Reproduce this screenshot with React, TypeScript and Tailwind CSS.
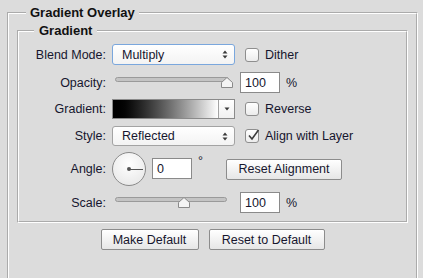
import React from 'react';

const ink = 'text-[#16162e]';

function UpDown() {
  return (
    <svg width="6" height="9" viewBox="0 0 6 9" className="shrink-0">
      <path d="M3 0.5 L5.5 3.5 H0.5 Z" fill="#3a3a3a" />
      <path d="M3 8.5 L5.5 5.5 H0.5 Z" fill="#3a3a3a" />
    </svg>
  );
}

function Select({ value, focused }: { value: string; focused?: boolean }) {
  return (
    <div
      className={`w-[123px] flex items-center justify-between pl-[9px] pr-[6px] rounded-[3px] border bg-gradient-to-b from-white to-[#f3f3f3] ${
        focused ? 'h-[21px] border-[#7aa7dd]' : 'h-[20px] border-[#a3a3a3]'
      }`}
    >
      <span className={ink}>{value}</span>
      <UpDown />
    </div>
  );
}

function Check({ label, checked }: { label: string; checked?: boolean }) {
  return (
    <div className="flex items-center ml-[10px]">
      <div className="relative w-[14px] h-[14px] rounded-[3px] border border-[#8e8e8e] bg-gradient-to-b from-white to-[#ececec]">
        {checked && (
          <svg width="16" height="15" viewBox="0 0 16 15" className="absolute left-[0px] top-[-2px]">
            <path d="M3 7.5 L6 11 L12.5 2" fill="none" stroke="#3c3c3c" strokeWidth="1.6" />
          </svg>
        )}
      </div>
      <span className={`ml-[6px] ${ink}`}>{label}</span>
    </div>
  );
}

function Thumb() {
  return (
    <svg width="12" height="11" viewBox="0 0 12 11">
      <path d="M6 0.5 L11.5 5.5 V10.5 H0.5 V5.5 Z" fill="#f4f4f4" stroke="#8a8a8a" />
    </svg>
  );
}

function Slider({ width, pos }: { width: number; pos: number }) {
  return (
    <div className="ml-[3px] mt-[5px] self-start flex flex-col" style={{ width }}>
      <div className="h-[5px] rounded-[3px] border border-[#9a9a9a] bg-[#c4c4c4]" />
      <div className="h-[10px] -mt-[5px]" style={{ paddingLeft: pos }}>
        <Thumb />
      </div>
    </div>
  );
}

function NumBox({ value, w = 40 }: { value: string; w?: number }) {
  return (
    <div
      className={`h-[21px] border border-[#8a8a8a] bg-white flex items-center pl-[4px] ${ink}`}
      style={{ width: w }}
    >
      {value}
    </div>
  );
}

function Btn({ label, w }: { label: string; w: number }) {
  return (
    <div
      className={`h-[21px] flex items-center justify-center rounded-[2px] border border-[#8c8c8c] bg-gradient-to-b from-white to-[#e6e6e6] text-[12.5px] ${ink}`}
      style={{ width: w }}
    >
      {label}
    </div>
  );
}

function Row({ label, children, className = '' }: { label: string; children: React.ReactNode; className?: string }) {
  return (
    <div className={`flex items-center ${className}`}>
      <div className={`w-[87px] text-right ${ink}`}>{label}</div>
      <div className="ml-[6px] flex items-center self-stretch">{children}</div>
    </div>
  );
}

export default function App() {
  return (
    <div className="w-[423px] h-[278px] overflow-hidden bg-[#dcdcdc] font-['Liberation_Sans',Arial,sans-serif] text-[12.5px] leading-[14px] pt-[5px]">
      <fieldset className="ml-[7px] w-[411px] h-[300px] border-2 border-white [border-style:groove] p-0">
        <legend className="ml-[17px] px-[4px] text-[13px] leading-[15px] font-bold text-[#111]">Gradient Overlay</legend>

        <fieldset className="ml-[8px] mt-[3px] w-[391px] h-[200px] border-2 border-white [border-style:groove] p-0 pt-[6px]">
          <legend className="ml-[15px] px-[5px] text-[13px] leading-[15px] font-bold text-[#111]">Gradient</legend>

          <Row label="Blend Mode:" className="h-[21px]">
            <Select value="Multiply" focused />
            <Check label="Dither" />
          </Row>

          <Row label="Opacity:" className="h-[21px] mt-[7px]">
            <Slider width={114} pos={106} />
            <div className="ml-[11px]">
              <NumBox value="100" />
            </div>
            <span className={`ml-[6px] ${ink}`}>%</span>
          </Row>

          <Row label="Gradient:" className="h-[20px] mt-[6px]">
            <div className="w-[123px] h-[20px] flex border border-[#8a8a8a] bg-white">
              <div className="flex-1 bg-gradient-to-r from-black to-white" />
              <div className="w-[16px] border-l border-[#a3a3a3] bg-gradient-to-b from-white to-[#f0f0f0] flex items-center justify-center">
                <svg width="6" height="4" viewBox="0 0 6 4">
                  <path d="M0.5 0.5 H5.5 L3 3.5 Z" fill="#3a3a3a" />
                </svg>
              </div>
            </div>
            <Check label="Reverse" />
          </Row>

          <Row label="Style:" className="h-[20px] mt-[7px]">
            <Select value="Reflected" />
            <Check label="Align with Layer" checked />
          </Row>

          <Row label="Angle:" className="h-[35px] mt-[5px]">
            <div className="relative w-[34px] h-[34px] rounded-full border border-[#8a8a8a] bg-[radial-gradient(circle_at_50%_35%,#ffffff,#e4e4e4)]">
              <div className="absolute left-[16px] top-[16px] w-[14px] h-[1.5px] bg-[#555]" />
              <div className="absolute left-[14px] top-[14.5px] w-[4px] h-[4px] rounded-full bg-[#555]" />
            </div>
            <div className="ml-[6px]">
              <NumBox value="0" />
            </div>
            <span className={`ml-[6px] self-start mt-[3px] ${ink}`}>°</span>
            <div className="ml-[23px] mt-[1px]">
              <Btn label="Reset Alignment" w={116} />
            </div>
          </Row>

          <Row label="Scale:" className="h-[21px] mt-[6px]">
            <Slider width={112} pos={63} />
            <div className="ml-[13px]">
              <NumBox value="100" />
            </div>
            <span className={`ml-[6px] ${ink}`}>%</span>
          </Row>
        </fieldset>

        <div className="flex justify-center gap-[10px] mt-[6px]">
          <Btn label="Make Default" w={98} />
          <Btn label="Reset to Default" w={116} />
        </div>
      </fieldset>
    </div>
  );
}
